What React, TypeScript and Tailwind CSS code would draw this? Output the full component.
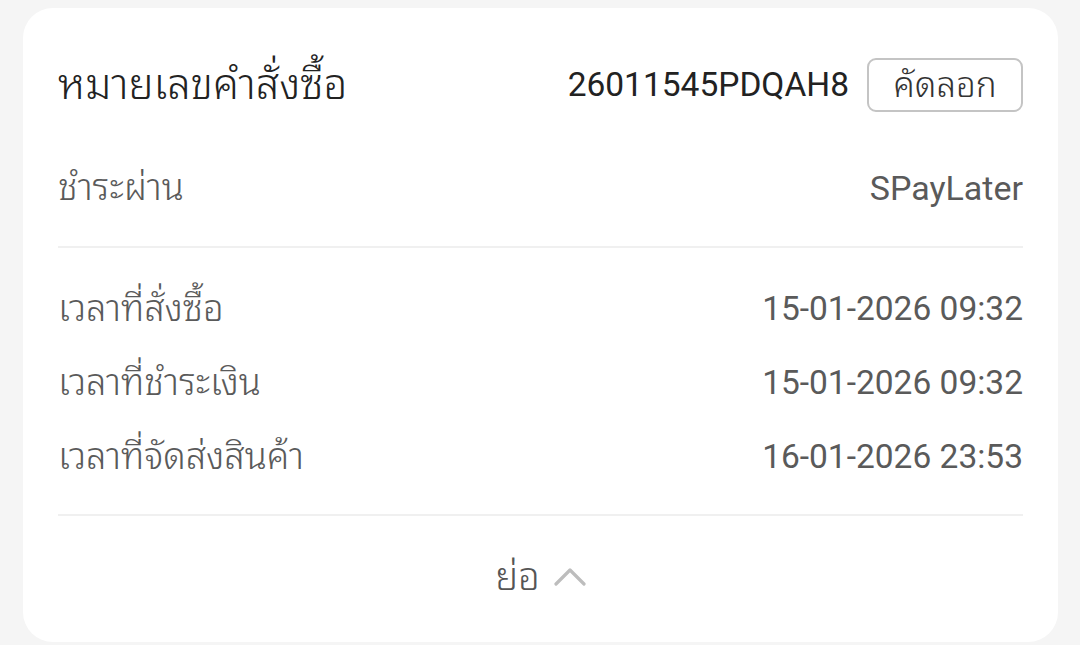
const rows = [
  { label: "เวลาที่สั่งซื้อ", value: "15-01-2026 09:32" },
  { label: "เวลาที่ชำระเงิน", value: "15-01-2026 09:32" },
  { label: "เวลาที่จัดส่งสินค้า", value: "16-01-2026 23:53" },
];

export default function App() {
  return (
    <div className="h-[645px] w-[1080px] overflow-hidden bg-[#f5f5f5] pt-2 pl-[23px] pr-[22px] font-['Roboto','Noto_Sans_Thai_Looped',sans-serif]">
      <div className="h-[634px] rounded-[30px] bg-white px-[35px] pt-[50px]">
        {/* Order number */}
        <div className="flex h-[54px] items-center justify-between">
          <span className="text-[42px] font-[350] leading-none text-[#222]">หมายเลขคำสั่งซื้อ</span>
          <div className="flex items-center gap-[18px]">
            <span className="text-[33.5px] leading-none text-[#222]">26011545PDQAH8</span>
            <button
              type="button"
              className="flex h-[54px] w-[156px] items-center justify-center rounded-[9px] border-2 border-[#c4c4c4] text-[35px] font-[350] leading-none text-[#333]"
            >
              คัดลอก
            </button>
          </div>
        </div>

        {/* Payment method */}
        <div className="mt-[39px] flex h-[74px] items-center justify-between leading-none text-[#5a5a5a]">
          <span className="text-[36.5px] font-[350]">ชำระผ่าน</span>
          <span className="text-[34px]">SPayLater</span>
        </div>

        <div className="mt-[21px] h-[2px] bg-[#f0f0f0]" />

        {/* Timestamps */}
        <div className="mt-[24px]">
          {rows.map((r) => (
            <div
              key={r.label}
              className="flex h-[74px] items-center justify-between leading-none text-[#5a5a5a]"
            >
              <span className="text-[36.5px] font-[350]">{r.label}</span>
              <span className="text-[33.5px]">{r.value}</span>
            </div>
          ))}
        </div>

        <div className="mt-[20px] h-[2px] bg-[#f0f0f0]" />

        {/* Collapse */}
        <div className="flex h-[126px] items-center justify-center gap-[14px] pb-1">
          <span className="text-[38.5px] font-[350] leading-none text-[#555]">ย่อ</span>
          <svg
            className="h-[20px] w-[32px]"
            viewBox="0 0 32 20"
            fill="none"
            stroke="#bdbdbd"
            strokeWidth="3.2"
            strokeLinecap="round"
            strokeLinejoin="round"
            aria-hidden="true"
          >
            <path d="M2 17 16 3l14 14" />
          </svg>
        </div>
      </div>
    </div>
  );
}
